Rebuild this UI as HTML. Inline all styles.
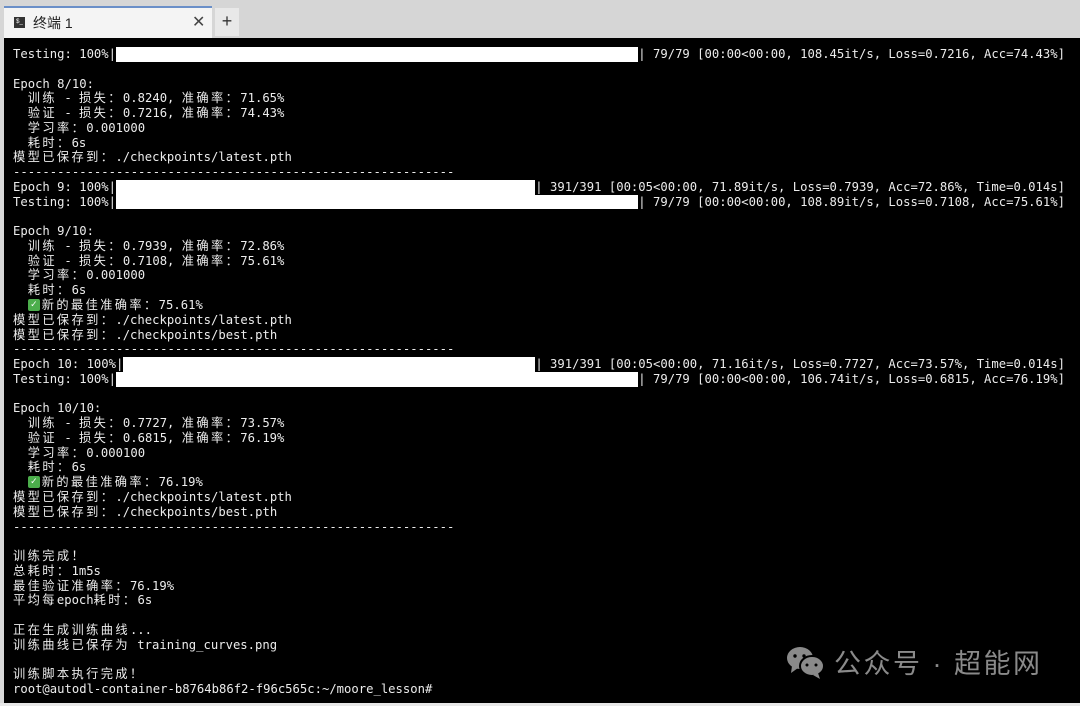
<!DOCTYPE html>
<html><head><meta charset="utf-8"><style>
html,body{margin:0;padding:0;width:1080px;height:706px;overflow:hidden;background:#d9d9d9}
.tabbar{position:absolute;left:0;top:0;width:1080px;height:38px;background:#d6d6d6}
.tab{position:absolute;left:4px;top:6px;width:208px;height:32px;background:#f4f4f4;border-top:2px solid #6a8fc8;box-sizing:border-box;font-family:"Liberation Sans","Noto Sans CJK SC",sans-serif;font-size:14px;color:#222}
.tab .ic{position:absolute;left:10px;top:9px;width:11px;height:11px;background:#333;color:#fff;font-size:6px;line-height:11px;text-align:center}
.tab .t{position:absolute;left:29px;top:5px}
.tab .x{position:absolute;left:188px;top:4px;font-size:16px;color:#444;font-weight:300}
.plus{position:absolute;left:215px;top:8px;width:24px;height:28px;background:#e8e8e8;font-family:"Liberation Sans",sans-serif;font-size:18px;color:#333;text-align:center;line-height:26px}
.term{position:absolute;left:4px;top:38px;width:1076px;height:665px;background:#000}
.bottom{position:absolute;left:0;top:703px;width:1080px;height:3px;background:#e8e8e8}
pre{position:absolute;left:9px;top:9px;margin:0;font-family:"DejaVu Sans Mono","Noto Sans CJK SC",monospace;font-size:12.22px;line-height:14.77px;color:#ececec;white-space:pre}
.c{letter-spacing:2.4px}
.b{display:inline-block;background:#fff;height:14.77px;vertical-align:top}
.ok{display:inline-block;width:12px;height:12px;background:#4cae4c;color:#fff;font-size:10px;line-height:12px;text-align:center;vertical-align:top;margin-top:1px;margin-right:2px;border-radius:2px}
.wm{position:absolute;left:834px;top:647px;font-family:"Liberation Sans","Noto Sans CJK SC",sans-serif;font-size:27px;color:#8a8a8a;letter-spacing:2.5px;line-height:34px}
</style></head><body>
<div class="tabbar"><div class="tab"><div class="ic">$_</div><div class="t">终端 1</div><div class="x">✕</div></div><div class="plus">+</div></div>
<div class="term">
<pre>Testing: 100%|<span class="b" style="width:71ch"></span>| 79/79 [00:00&lt;00:00, 108.45it/s, Loss=0.7216, Acc=74.43%]

Epoch 8/10:
  <span class="c">训练</span> - <span class="c">损失：</span>0.8240, <span class="c">准确率：</span>71.65%
  <span class="c">验证</span> - <span class="c">损失：</span>0.7216, <span class="c">准确率：</span>74.43%
  <span class="c">学习率：</span>0.001000
  <span class="c">耗时：</span>6s
<span class="c">模型已保存到：</span>./checkpoints/latest.pth
------------------------------------------------------------
Epoch 9: 100%|<span class="b" style="width:57ch"></span>| 391/391 [00:05&lt;00:00, 71.89it/s, Loss=0.7939, Acc=72.86%, Time=0.014s]
Testing: 100%|<span class="b" style="width:71ch"></span>| 79/79 [00:00&lt;00:00, 108.89it/s, Loss=0.7108, Acc=75.61%]

Epoch 9/10:
  <span class="c">训练</span> - <span class="c">损失：</span>0.7939, <span class="c">准确率：</span>72.86%
  <span class="c">验证</span> - <span class="c">损失：</span>0.7108, <span class="c">准确率：</span>75.61%
  <span class="c">学习率：</span>0.001000
  <span class="c">耗时：</span>6s
  <span class="ok">✓</span><span class="c">新的最佳准确率：</span>75.61%
<span class="c">模型已保存到：</span>./checkpoints/latest.pth
<span class="c">模型已保存到：</span>./checkpoints/best.pth
------------------------------------------------------------
Epoch 10: 100%|<span class="b" style="width:56ch"></span>| 391/391 [00:05&lt;00:00, 71.16it/s, Loss=0.7727, Acc=73.57%, Time=0.014s]
Testing: 100%|<span class="b" style="width:71ch"></span>| 79/79 [00:00&lt;00:00, 106.74it/s, Loss=0.6815, Acc=76.19%]

Epoch 10/10:
  <span class="c">训练</span> - <span class="c">损失：</span>0.7727, <span class="c">准确率：</span>73.57%
  <span class="c">验证</span> - <span class="c">损失：</span>0.6815, <span class="c">准确率：</span>76.19%
  <span class="c">学习率：</span>0.000100
  <span class="c">耗时：</span>6s
  <span class="ok">✓</span><span class="c">新的最佳准确率：</span>76.19%
<span class="c">模型已保存到：</span>./checkpoints/latest.pth
<span class="c">模型已保存到：</span>./checkpoints/best.pth
------------------------------------------------------------

<span class="c">训练完成！</span>
<span class="c">总耗时：</span>1m5s
<span class="c">最佳验证准确率：</span>76.19%
<span class="c">平均每</span>epoch<span class="c">耗时：</span>6s

<span class="c">正在生成训练曲线</span>...
<span class="c">训练曲线已保存为</span> training_curves.png

<span class="c">训练脚本执行完成！</span>
root@autodl-container-b8764b86f2-f96c565c:~/moore_lesson#</pre>
</div>
<svg style="position:absolute;left:786px;top:646px" width="40" height="34" viewBox="0 0 40 34">
<ellipse cx="14" cy="12" rx="13" ry="11" fill="#8a8a8a"/>
<path d="M6 20 L5 27 L12 22Z" fill="#8a8a8a"/>
<ellipse cx="26" cy="20" rx="12" ry="10" fill="#8a8a8a" stroke="#000" stroke-width="2"/>
<path d="M32 27 L34 33 L27 29Z" fill="#8a8a8a"/>
<circle cx="9" cy="10" r="1.7" fill="#000"/><circle cx="18" cy="10" r="1.7" fill="#000"/>
<circle cx="21" cy="19" r="1.5" fill="#000"/><circle cx="30" cy="19" r="1.5" fill="#000"/>
</svg>
<div class="wm">公众号 · 超能网</div>
<div class="bottom"></div>
</body></html>
